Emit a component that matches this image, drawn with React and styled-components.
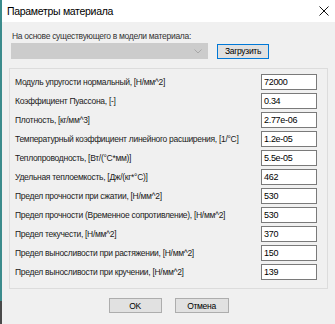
import React from "react";
import styled, { createGlobalStyle } from "styled-components";

const Global = createGlobalStyle`
  html, body {
    margin: 0;
    padding: 0;
    background: #f0f0f0;
  }
  * {
    box-sizing: border-box;
  }
`;

const Frame = styled.div`
  width: 335px;
  height: 324px;
  display: flex;
  flex-direction: column;
  background: #f0f0f0;
  font-family: "Liberation Sans", Arial, sans-serif;
  font-size: 8.5px;
  letter-spacing: -0.3px;
  color: #000;
  white-space: nowrap;
  border-left: 2px solid;
  border-image: linear-gradient(to bottom, #3b8b8c 0, #3b8b8c 300px, #4a4a4a 300px) 1;
  overflow: hidden;
`;

const TitleBar = styled.div`
  height: 22px;
  flex: none;
  background: #fff;
  display: flex;
  align-items: center;
  justify-content: space-between;
  padding: 0 6px 0 5px;
  font-size: 10.5px;
  letter-spacing: -0.3px;
`;

const Close = styled.svg`
  width: 10px;
  height: 10px;
`;

const Body = styled.div`
  flex: 1;
  display: flex;
  flex-direction: column;
  padding: 9px 7px 0 7px;
`;

const Caption = styled.div`
  padding-left: 3px;
  height: 11px;
  line-height: 11px;
  color: #333;
`;

const TopRow = styled.div`
  display: flex;
  align-items: center;
  margin-top: 1px;
  padding-left: 2px;
  gap: 9px;
`;

const Combo = styled.div`
  width: 197px;
  height: 16px;
  background: #cccccc;
  border: 1px solid #cccccc;
  display: flex;
  justify-content: flex-end;
  align-items: center;
  padding-right: 5px;
`;

const Button = styled.button`
  width: ${(p) => p.$w || 53}px;
  height: ${(p) => p.$h || 15}px;
  padding: 0;
  font-family: inherit;
  font-size: 8.5px;
  letter-spacing: inherit;
  color: #000;
  background: #e1e1e1;
  border: 1px solid ${(p) => (p.$focus ? "#0078d7" : "#adadad")};
  display: flex;
  align-items: center;
  justify-content: center;
`;

const Group = styled.div`
  margin-top: 9px;
  border: 1px solid #dcdcdc;
  padding: 5px 10px 8px 4px;
  display: flex;
  flex-direction: column;
  gap: 3px;
`;

const Row = styled.div`
  height: 16px;
  display: flex;
  align-items: center;
  justify-content: space-between;
`;

const Label = styled.span`
  padding-left: 1px;
  color: #1a1a1a;
`;

const Field = styled.div`
  width: 56px;
  height: 16px;
  flex: none;
  background: #fff;
  border: 1px solid #7a7a7a;
  padding-left: 2px;
  line-height: 14px;
  font-size: 9px;
`;

const Footer = styled.div`
  display: flex;
  justify-content: center;
  gap: 13px;
  margin-top: 9px;
`;

const rows = [
  ["Модуль упругости нормальный, [Н/мм^2]", "72000"],
  ["Коэффициент Пуассона, [-]", "0.34"],
  ["Плотность, [кг/мм^3]", "2.77e-06"],
  ["Температурный коэффициент линейного расширения, [1/°C]", "1.2e-05"],
  ["Теплопроводность, [Вт/(°C*мм)]", "5.5e-05"],
  ["Удельная теплоемкость, [Дж/(кг*°C)]", "462"],
  ["Предел прочности при сжатии, [Н/мм^2]", "530"],
  ["Предел прочности (Временное сопротивление), [Н/мм^2]", "530"],
  ["Предел текучести, [Н/мм^2]", "370"],
  ["Предел выносливости при растяжении, [Н/мм^2]", "150"],
  ["Предел выносливости при кручении, [Н/мм^2]", "139"],
];

export default function App() {
  return (
    <>
      <Global />
      <Frame>
        <TitleBar>
          <span>Параметры материала</span>
          <Close viewBox="0 0 10 10">
            <path d="M0.5 0.5 L9.5 9.5 M9.5 0.5 L0.5 9.5" stroke="#111" strokeWidth="1" />
          </Close>
        </TitleBar>
        <Body>
          <Caption>На основе существующего в модели материала:</Caption>
          <TopRow>
            <Combo>
              <svg width="8" height="5" viewBox="0 0 8 5">
                <path d="M0.5 0.5 L4 4 L7.5 0.5" fill="none" stroke="#a8a8a8" />
              </svg>
            </Combo>
            <Button $focus $w={52}>Загрузить</Button>
          </TopRow>
          <Group>
            {rows.map(([label, value]) => (
              <Row key={label}>
                <Label>{label}</Label>
                <Field>{value}</Field>
              </Row>
            ))}
          </Group>
          <Footer>
            <Button $w={53} $h={15}>OK</Button>
            <Button $w={54} $h={15}>Отмена</Button>
          </Footer>
        </Body>
      </Frame>
    </>
  );
}
